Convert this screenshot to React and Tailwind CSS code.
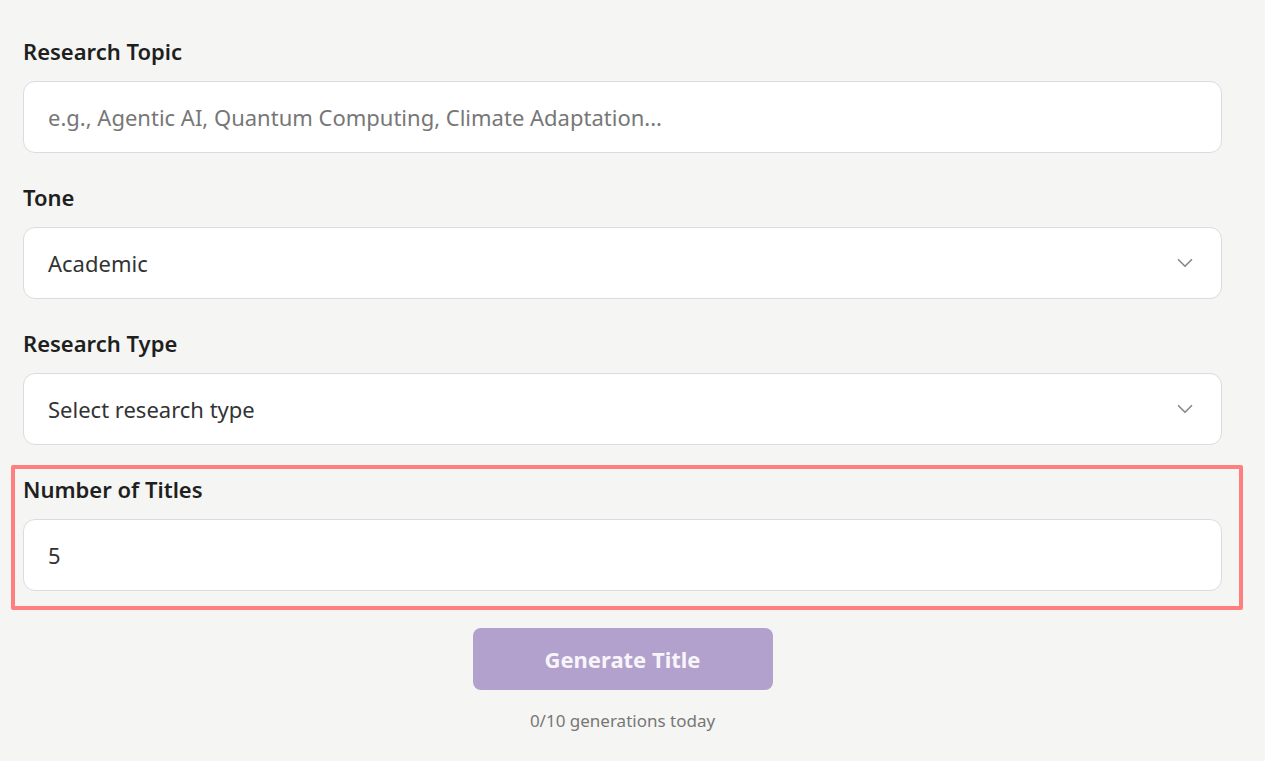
import { ChevronDown } from "lucide-react";

const Field = ({ label, children, highlight }) => {
  return (
    <div className="relative">
      {highlight && (
        <div className="pointer-events-none absolute -top-[10px] -bottom-[19px] -left-[12px] -right-[21px] border-4 border-[#ff7f7f] rounded-[2px]" />
      )}
      <label className="block text-[22px] leading-[28px] font-semibold text-[#1f1f1f] mb-4">
        {label}
      </label>
      {children}
    </div>
  );
};

const Select = ({ value }) => {
  return (
    <div className="flex items-center justify-between h-[72px] bg-white border border-[#dcdae3] rounded-xl pl-6 pr-[23px]">
      <span className="text-[22px] text-[#333333]">{value}</span>
      <ChevronDown size={26} strokeWidth={1.6} className="text-[#8a8a8a]" />
    </div>
  );
};

export default function App() {
  return (
    <div
      className="min-h-[761px] bg-[#f5f5f3] pt-[37px]"
      style={{ fontFamily: '"Noto Sans", "Open Sans", sans-serif' }}
    >
      <div className="w-[1199px] ml-[23px]">
        <div className="flex flex-col gap-[30px]">
          <Field label="Research Topic">
            <input
              className="w-full h-[72px] bg-white border border-[#dcdae3] rounded-xl px-6 text-[22px] text-[#333] placeholder:text-[#777] outline-none"
              placeholder="e.g., Agentic AI, Quantum Computing, Climate Adaptation..."
            />
          </Field>
          <Field label="Tone">
            <Select value="Academic" />
          </Field>
          <Field label="Research Type">
            <Select value="Select research type" />
          </Field>
          <Field label="Number of Titles" highlight>
            <input
              className="w-full h-[72px] bg-white border border-[#dcdae3] rounded-xl px-6 text-[22px] text-[#333] outline-none"
              defaultValue="5"
            />
          </Field>
        </div>
        <div className="flex flex-col items-center mt-[37px]">
          <button className="w-[300px] h-[62px] rounded-lg bg-[#b3a1cd] text-[#f7f5fa] text-[22px] font-bold">
            Generate Title
          </button>
          <p className="mt-[18px] text-[17px] text-[#777]">0/10 generations today</p>
        </div>
      </div>
    </div>
  );
}
